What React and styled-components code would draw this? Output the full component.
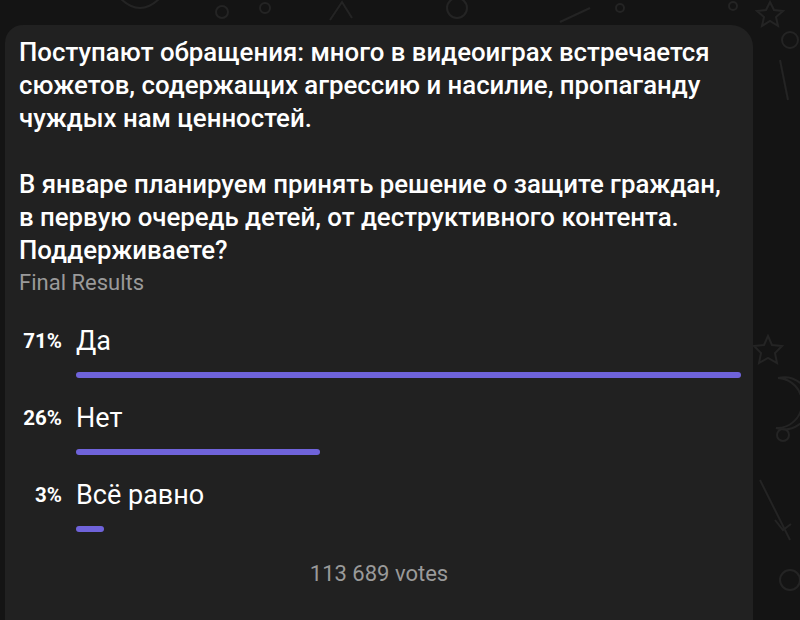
import React from "react";
import styled, { createGlobalStyle } from "styled-components";

const GlobalStyle = createGlobalStyle`
  html, body {
    margin: 0;
    padding: 0;
    background: #141414;
    font-family: Roboto, "Noto Sans", sans-serif;
  }
`;

const Page = styled.div`
  position: relative;
  width: 800px;
  height: 620px;
  overflow: hidden;
  background: #141414;
  padding: 25px 0 0 5px;
  box-sizing: border-box;
`;

const Doodles = styled.svg`
  position: absolute;
  inset: 0;
  pointer-events: none;
`;

const Card = styled.div`
  position: relative;
  width: 748px;
  min-height: 620px;
  background: #212121;
  border-radius: 18px 22px 0 0;
  padding: 11px 12px 0 14px;
  box-sizing: border-box;
  color: #fff;
`;

const Question = styled.div`
  font-size: 25.8px;
  font-weight: 500;
  line-height: 33px;
  white-space: pre-line;
`;

const Caption = styled.div`
  color: #9a9a9a;
  font-size: 22px;
  line-height: 26px;
  margin-top: 3px;
`;

const Options = styled.div`
  display: flex;
  flex-direction: column;
  gap: 24px;
  margin-top: 29px;
`;

const Option = styled.div`
  display: grid;
  grid-template-columns: 43px 1fr;
  column-gap: 14px;
  row-gap: 15px;
  align-items: center;
`;

const Percent = styled.span`
  text-align: right;
  font-size: 20.5px;
  font-weight: 700;
`;

const Label = styled.span`
  font-size: 27px;
  line-height: 32px;
`;

const Bar = styled.div`
  grid-column: 2;
  height: 6px;
  border-radius: 3px;
  background: #6f63da;
`;

const Votes = styled.div`
  text-align: center;
  color: #9a9a9a;
  font-size: 22px;
  line-height: 26px;
  margin-top: 29px;
  padding-right: 2px;
`;

const options = [
  { pct: 71, label: "Да" },
  { pct: 26, label: "Нет" },
  { pct: 3, label: "Всё равно" },
];

const question = `Поступают обращения: много в видеоиграх встречается
сюжетов, содержащих агрессию и насилие, пропаганду
чуждых нам ценностей.

В январе планируем принять решение о защите граждан,
в первую очередь детей, от деструктивного контента.
Поддерживаете?`;

export default function App() {
  const max = Math.max(...options.map((o) => o.pct));
  return (
    <>
      <GlobalStyle />
      <Page>
        <Doodles width="800" height="620" fill="none" stroke="#242424" strokeWidth="2">
          <circle cx="222" cy="12" r="6" />
          <circle cx="265" cy="8" r="5" />
          <path d="M120 -2 q20 20 40 0" />
          <path d="M330 20 l12 -18 l10 16" />
          <circle cx="457" cy="8" r="10" />
          <path d="M560 22 l30 -14" />
          <circle cx="620" cy="8" r="4" />
          <circle cx="733" cy="6" r="4" />
          <path d="M770 2 l4 8 l9 1 l-7 6 l2 9 l-8 -5 l-8 5 l2 -9 l-7 -6 l9 -1 z" />
          <circle cx="790" cy="40" r="8" />
          <path d="M780 60 l8 40" />
          <path d="M768 336 l4 9 l10 1 l-7 7 l2 10 l-9 -5 l-9 5 l2 -10 l-7 -7 l10 -1 z" />
          <path d="M778 378 a26 26 0 1 1 -2 50 a20 20 0 0 0 2 -50" />
          <circle cx="783" cy="435" r="6" />
          <path d="M760 480 l30 60" />
          <path d="M775 520 l8 10 l8 -6" />
          <circle cx="790" cy="580" r="10" />
        </Doodles>
        <Card>
          <Question>{question}</Question>
          <Caption>Final Results</Caption>
          <Options>
            {options.map((o) => (
              <Option key={o.label}>
                <Percent>{o.pct}%</Percent>
                <Label>{o.label}</Label>
                <Bar style={{ width: `${(o.pct / max) * 100}%` }} />
              </Option>
            ))}
          </Options>
          <Votes>113 689 votes</Votes>
        </Card>
      </Page>
    </>
  );
}
